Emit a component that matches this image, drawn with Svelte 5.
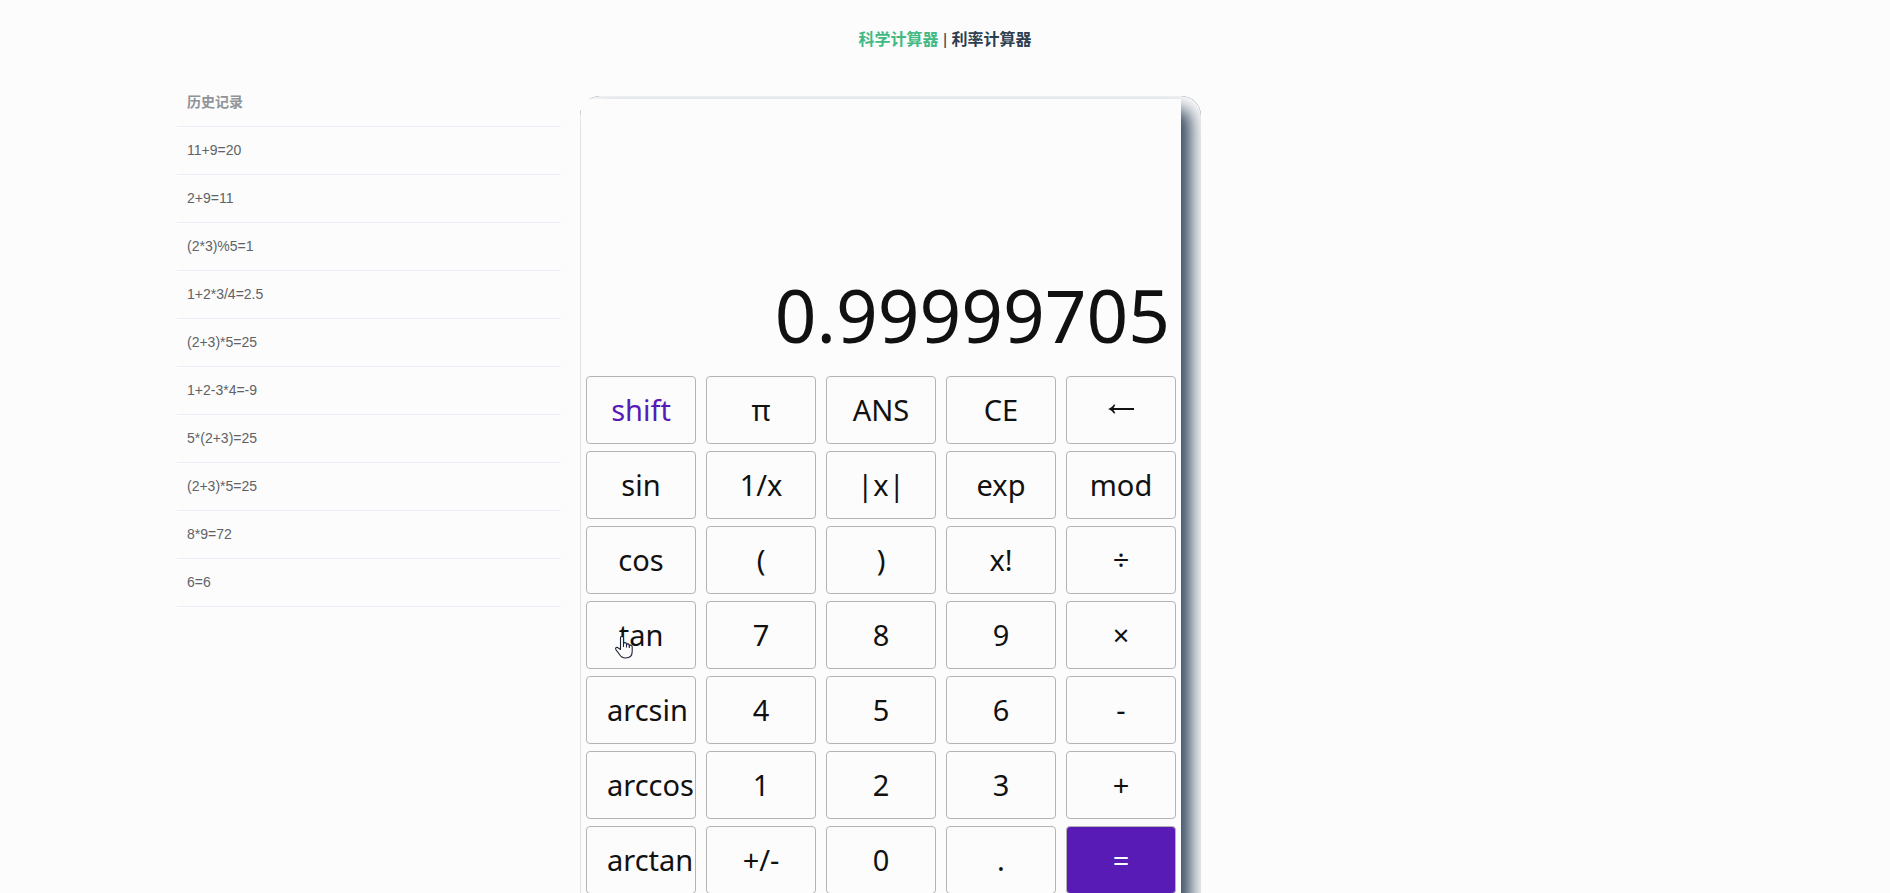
<script>
  const history = [
    '11+9=20', '2+9=11', '(2*3)%5=1', '1+2*3/4=2.5', '(2+3)*5=25',
    '1+2-3*4=-9', '5*(2+3)=25', '(2+3)*5=25', '8*9=72', '6=6'
  ];
  const keys = [
    'shift', 'π', 'ANS', 'CE', '←',
    'sin', '1/x', '|x|', 'exp', 'mod',
    'cos', '(', ')', 'x!', '÷',
    'tan', '7', '8', '9', '×',
    'arcsin', '4', '5', '6', '-',
    'arccos', '1', '2', '3', '+',
    'arctan', '+/-', '0', '.', '='
  ];
  const result = '0.99999705';
</script>

<div class="page">
  <nav>
    <a href="#scientific" class="active">科学计算器</a> | <a href="#interest">利率计算器</a>
  </nav>

  <main>
    <table>
      <thead>
        <tr><th scope="col">历史记录</th></tr>
      </thead>
      <tbody>
        {#each history as entry}
          <tr><td>{entry}</td></tr>
        {/each}
      </tbody>
    </table>

    <section class="calculator">
      <output class="display">{result}</output>
      <div class="keys">
        {#each keys as key}
          <button type="button" class:shift={key === 'shift'} class:equals={key === '='}>
            {#if key === '←'}
              <svg class="arrow" viewBox="0 0 26 12" role="img" aria-label="←">
                <path d="M26 4H5.500C6.400 2.900 7 1.800 7.300.8L5.900.4C4.500 2.500 2.500 4.200 0 5c2.500.8 4.500 2.500 5.900 4.600l1.400-.4C7 8.200 6.400 7.100 5.500 6H26z" fill="currentColor" />
              </svg>
            {:else}{key}{/if}
            {#if key === 'tan'}
              <svg class="pointer" viewBox="0 0 18 24" aria-hidden="true">
                <path
                  d="M5.500 14.500V3c0-2.200 3-2.200 3 0v6c.2-1.900 2.900-1.700 3 0v1c.3-1.600 2.700-1.400 2.800.2v.8c.5-1.500 2.900-1 2.900.8v4.700c0 4-2.700 6.500-6.700 6.500-3.200 0-5-1.600-6.300-4L.9 14.600c-1-1.900 1.100-3 2.400-1.600z"
                  fill="#fcfcfc" stroke="#1c2338" stroke-width="1.100" stroke-linejoin="round" />
                <path d="M8.500 8v4M11.500 9.500V12.500M14.300 10.500V13" fill="none" stroke="#1c2338" stroke-width="1.100" />
              </svg>
            {/if}
          </button>
        {/each}
      </div>
    </section>
  </main>
</div>

<style>
  :global(body) {
    margin: 0;
    background: #fcfcfc;
  }

  .page {
    height: 100vh;
    overflow: auto;
    scrollbar-width: none;
    background: #fcfcfc;
    color: #2c3e50;
    font-family: "Liberation Sans", "Noto Sans CJK SC", sans-serif;
  }

  nav {
    padding: 28px 30px;
    font-size: 16px;
    line-height: 23px;
    text-align: center;
  }

  nav a {
    color: #2c3e50;
    font-weight: 700;
    text-decoration: none;
  }

  nav a.active {
    color: #42b983;
  }

  main {
    display: grid;
    grid-template-columns: 384fr 600px 709fr;
    column-gap: 20px;
    align-items: start;
    padding-left: 177px;
    margin-right: -20px;
  }

  table {
    width: 100%;
    border-collapse: separate;
    border-spacing: 0;
    font-size: 14px;
    line-height: 23px;
    text-align: left;
  }

  th,
  td {
    height: 47px;
    padding: 0 10px;
    border-bottom: 1px solid #ebeef5;
    color: #606266;
  }

  th {
    color: #909399;
    font-weight: 700;
  }

  .calculator {
    position: relative;
    z-index: 0;
    margin-top: 20px;
    color: #111;
    font-family: "Noto Sans", "Open Sans", sans-serif;
  }

  /* Drop shadow with a crisp, rounded outer edge */
  .calculator::before {
    content: "";
    position: absolute;
    z-index: -1;
    inset: -3px -20px -20px -1px;
    border-radius: 20px;
    background: #34495e;
    box-shadow: inset 0 3px 17px 10px #fcfcfc;
  }

  .display,
  .keys {
    background: #fcfcfc;
  }

  .display {
    display: block;
    padding: 166px 11px 11px;
    font-size: 73px;
    line-height: 100px;
    text-align: right;
  }

  .keys {
    display: grid;
    grid-template-columns: repeat(5, minmax(0, 1fr));
    gap: 7px 10px;
    padding: 0 5px 7px;
  }

  button {
    position: relative;
    box-sizing: border-box;
    min-width: 0;
    height: 68px;
    padding: 0 20px;
    border: 1px solid #b4b4b4;
    border-radius: 4px;
    background: #fcfcfc;
    color: #111;
    font: inherit;
    font-size: 29px;
    line-height: 40px;
    text-align: center;
    white-space: nowrap;
    cursor: pointer;
  }

  .shift {
    color: #581bb5;
  }

  .equals {
    background: #581bb5;
    color: #fcfcfc;
  }

  .arrow {
    display: block;
    width: 26px;
    height: 12px;
    margin: 0 auto;
  }

  .pointer {
    position: absolute;
    top: 33px;
    left: 28px;
    width: 18px;
    height: 24px;
  }
</style>
